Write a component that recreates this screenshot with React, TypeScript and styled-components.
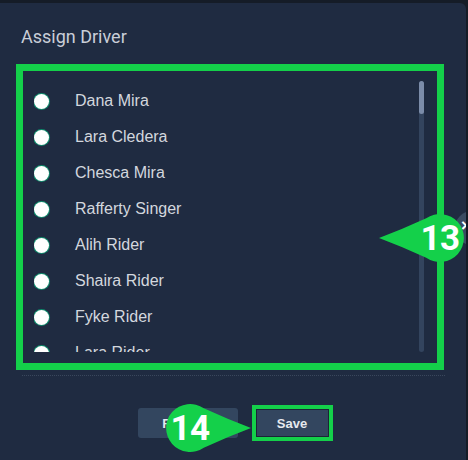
import React from 'react'
import styled, { createGlobalStyle } from 'styled-components'

const GREEN = '#14d04a'

const drivers = [
  'Dana Mira',
  'Lara Cledera',
  'Chesca Mira',
  'Rafferty Singer',
  'Alih Rider',
  'Shaira Rider',
  'Fyke Rider',
  'Lara Rider',
]

const Global = createGlobalStyle`
  body {
    margin: 0;
    background: #151c27;
    font-family: "Liberation Sans", Arial, sans-serif;
  }
`

const Modal = styled.div`
  position: relative;
  margin-top: 3px;
  width: 466px;
  height: 457px;
  background: #1f2b41;
  border-top-right-radius: 6px;
  padding-top: 23px;
  box-sizing: border-box;
  overflow: hidden;
`

const Title = styled.h2`
  margin: 0 0 16px 21px;
  font-family: Roboto, "Liberation Sans", sans-serif;
  font-weight: 400;
  font-size: 18px;
  line-height: 22px;
  color: #c9ced8;
`

const Highlight = styled.div`
  margin: 0 22px 0 16px;
  border: 7px solid ${GREEN};
  padding: 10px 13px 11px 11px;
  display: flex;
`

const Rows = styled.div`
  flex: 1;
  height: 271px;
  overflow: hidden;
  padding-top: 2px;
  box-sizing: border-box;
`

const Row = styled.label`
  display: flex;
  align-items: center;
  gap: 26px;
  height: 36px;
  font-family: "Liberation Sans", Arial, sans-serif;
  font-size: 16px;
  color: #d3d7de;
`

const Radio = styled.span`
  width: 15px;
  height: 15px;
  border-radius: 50%;
  background: #ffffff;
  box-shadow: 0 0 0 1px #0f8a6c;
  flex: none;
`

const Track = styled.div`
  width: 5px;
  height: 271px;
  border-radius: 3px;
  background: #33445e;
  display: flex;
  flex-direction: column;
`

const Thumb = styled.div`
  height: 33px;
  border-radius: 3px;
  background: #7b8ca9;
`

const Divider = styled.div`
  margin: 5px 21px 0 22px;
  border-top: 1px dotted #3a475c;
`

const Actions = styled.div`
  display: flex;
  justify-content: center;
  align-items: center;
  gap: 18px;
  margin-top: 32px;
`

const Button = styled.button<{ $marked?: boolean }>`
  width: ${p => (p.$marked ? '73px' : '100px')};
  height: ${p => (p.$marked ? '28px' : '30px')};
  border: none;
  border-radius: ${p => (p.$marked ? '0' : '3px')};
  background: #33465f;
  color: #e6e9ee;
  font-family: "Liberation Sans", Arial, sans-serif;
  font-weight: 700;
  font-size: 13px;
  outline: ${p => (p.$marked ? `4px solid ${GREEN}` : 'none')};
  box-shadow: ${p => (p.$marked ? 'inset 0 0 0 1px #1b2536' : 'none')};
`

const Close = styled.div`
  position: absolute;
  left: 455px;
  top: 208px;
  width: 34px;
  height: 34px;
  border-radius: 50%;
  background: #3a4b62;
  color: #ffffff;
  font-size: 17px;
  font-weight: 700;
  line-height: 30px;
  padding-left: 6px;
  box-sizing: border-box;
`

const BadgeWrap = styled.div<{ $flip?: boolean }>`
  position: absolute;
  width: 86px;
  height: 50px;
  z-index: 2;
  svg {
    display: block;
    transform: ${p => (p.$flip ? 'scaleX(-1)' : 'none')};
  }
`

const BadgeText = styled.span<{ $flip?: boolean }>`
  position: absolute;
  top: 0;
  left: ${p => (p.$flip ? '1px' : '37px')};
  width: 48px;
  height: 50px;
  display: flex;
  align-items: center;
  justify-content: center;
  font-family: Roboto, "Liberation Sans", sans-serif;
  font-weight: 700;
  font-size: 35px;
  color: #ffffff;
  letter-spacing: -0.5px;
`

const Badge = ({ n, x, y, flip }: { n: number; x: number; y: number; flip?: boolean }) => (
  <BadgeWrap $flip={flip} style={{ left: x, top: y }}>
    <svg width="86" height="50" viewBox="0 0 86 50">
      <path
        d="M0 25 Q24 16 47.2 5.3 A24 24 0 1 1 47.2 44.7 Q24 34 0 25 Z"
        fill={GREEN}
      />
    </svg>
    <BadgeText $flip={flip}>{n}</BadgeText>
  </BadgeWrap>
)

export default function App() {
  return (
    <>
      <Global />
      <Modal>
        <Title>Assign Driver</Title>
        <Highlight>
          <Rows>
            {drivers.map(name => (
              <Row key={name}>
                <Radio />
                {name}
              </Row>
            ))}
          </Rows>
          <Track>
            <Thumb />
          </Track>
        </Highlight>
        <Divider />
        <Actions>
          <Button>Remove</Button>
          <Button $marked>Save</Button>
        </Actions>
        <Close>×</Close>
        <Badge n={13} x={379} y={210} />
        <Badge n={14} x={165} y={400} flip />
      </Modal>
    </>
  )
}
